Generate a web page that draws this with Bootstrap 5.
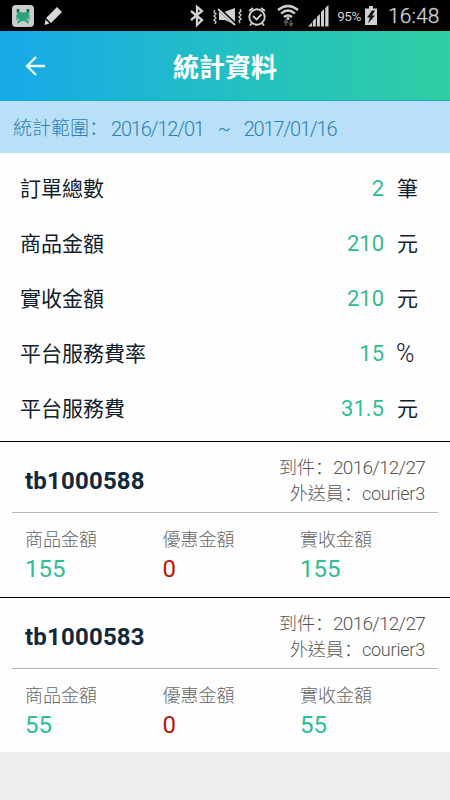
<!DOCTYPE html>
<html lang="zh-Hant">
<head>
<meta charset="utf-8">
<meta name="viewport" content="width=device-width, initial-scale=1">
<title>統計資料</title>
<link href="https://cdn.jsdelivr.net/npm/bootstrap@5.3.0/dist/css/bootstrap.min.css" rel="stylesheet">
<style>
body{font-family:Roboto,"Noto Sans CJK TC",sans-serif;background:#ededed;color:#10202c;white-space:nowrap;overflow:hidden}
.status-bar{height:31px;background:#000;color:#d0d0d0;padding:0 10px 0 12px}
.status-bar svg{display:block;flex:none}
.battery-text{font-size:13.5px;margin:2px 3px 0 7px;letter-spacing:-.4px}
.clock{font-size:21px;font-weight:300;margin-left:10px;padding-top:2px;line-height:29px;width:52px;letter-spacing:.1px;-webkit-text-stroke:.3px #d0d0d0}
.app-bar{height:70px;background:linear-gradient(90deg,#15a9e8,#22bfc4 50%,#2fcea3);color:#fff;border-bottom:1px solid #21a7c2}
.app-bar svg{width:24px;height:24px;margin-left:24px}
.app-title{font-size:26px;font-weight:700;line-height:65px;padding-top:5px}
.app-end{width:48px}
.range-bar{height:52px;background:#b9e0f9;color:#2f7fb3;padding:4px 12px 0 13px;font-size:19px;font-weight:300}
.range-date{font-size:20px;letter-spacing:-1.2px}
.range-date.from{margin-left:3px}
.tilde{margin:0 13px 0 14px}
.colon{font-family:"Noto Sans CJK SC",sans-serif;line-height:1}
.summary{padding:9px 32px 4px 20px;background:#fefefe}
.summary-row{height:55px;font-size:21px}
.summary-row .amount{color:#2fbd94;font-size:22px;padding-bottom:2px}
.unit{width:21px;margin-left:13px}
.unit.percent{font-size:25px;font-weight:300;line-height:30px;margin-left:12px;width:22px;padding-bottom:2px}
.order{height:156px;border-top:1.5px solid #000;background:#fefefe;padding:0 12px}
.order + .order{height:155px}
.order-head{height:71px;border-bottom:1px solid #b8b8b8;padding:13px 13px 0 13px}
.order-id{font-size:24px;line-height:52px;font-weight:700;color:#10293c;letter-spacing:.2px}
.meta{font-size:18px;line-height:26px;color:#555;font-weight:300}
.meta>div{height:26px}
.meta-val{font-size:19px;letter-spacing:-.75px;line-height:1}
.courier{font-size:18px;letter-spacing:-.2px;line-height:1}
.order-body{padding:13px 0 0 13px}
.order-body>div{width:137.5px}
.label-text{font-size:18px;line-height:27px;color:#666;font-weight:300}
.figure-text{font-size:24px;line-height:33px;color:#2fbd94}
.figure-text.red{color:#b81708}
</style>
<script src="https://cdn.jsdelivr.net/npm/bootstrap@5.3.0/dist/js/bootstrap.bundle.min.js"></script>
</head>
<body>
<div class="status-bar d-flex align-items-center">
<svg width="22" height="22" viewBox="0 0 22 22"><rect width="22" height="22" rx="4" fill="#ccc"/><path d="M6 6q5 3 10 0l1 3q0 5-3 6l3 1-1 3-2-2q-3-2-6 0l-2 2-1-3 3-1q-3-1-3-6z" fill="#2fa17b"/><path d="M6 4v4M16 4v4" stroke="#2fa17b" stroke-width="3"/><path d="M6 4v3M16 4v3" stroke="#253c30" stroke-width="1.2"/><path d="M5 10v5M17 10v5" stroke="#2fa17b" stroke-width="1.3"/></svg>
<svg class="ms-2" width="22" height="22" viewBox="0 0 22 22" fill="#d8d8d8"><path d="M4 13 15 2l5 5L9 18zM3.500 14.500l4 4L2.500 20z"/></svg>
<svg class="ms-auto" width="141" height="27" viewBox="189 1 141 27" fill="none" stroke="#d0d0d0">
<path d="m191 10 11 9-5 5V6l5 4-11 9" stroke-width="2.3"/>
<path d="m215 9-1 2 2 2-2 2 2 2-2 2 2 2-1 2m25-15 1 2-2 2 2 2-2 2 2 2-2 2 1 2" stroke-width="1.300"/>
<path d="M219 11h5l11-4v17l-10-5h-6z" fill="#d0d0d0" stroke="none"/><path d="m218 7 18 17" stroke="#000" stroke-width="3.500"/><path d="m218 8 17 16" stroke-width="1.800"/>
<circle cx="257" cy="16" r="7.700" stroke-width="1.900"/><path d="m253 15 3.500 3.500 5-5M249 10l4-3m8 0 4 3M252 22l-2 2.500m12-2.500 2 2.500" stroke-width="1.900"/>
<path d="M278 9q10-8 20 0m-17 3.500q7-6 14 0m-11 3.500q4-3 8 0" stroke-width="2.300"/><circle cx="288" cy="17.500" r="1.500" fill="#d0d0d0" stroke="none"/>
<path d="M286 25v-5m-2 2 2-3 2 3m3-3v5m-2-2 2 3 2-3" stroke="#555" stroke-width="1.500"/>
<g fill="#d0d0d0" stroke="none"><path d="M308 25.500l4-4v4zM312.800 20l3-3v8.500h-3zM316.900 16l3-3v12.500h-3zM321 11l3-3v17.500h-3zM325.200 7l3.300-3v21.500h-3.300z"/></g>
</svg>
<span class="battery-text">95%</span>
<svg width="14" height="21" viewBox="0 0 14 21"><path d="M5 1h4v2.500h4V20H1V3.500h4z" fill="#d0d0d0"/><path d="m8 5.500-5 7h3l-2 6 7-8H8l3-5z" fill="#111"/></svg>
<span class="clock">16:48</span>
</div>
<header class="app-bar d-flex justify-content-between align-items-center">
<svg viewBox="0 0 24 24" fill="none" stroke="#e8fbff" stroke-width="2.400"><path d="M21 12H3M12 3l-9 9 9 9"/></svg>
<div class="app-title">統計資料</div>
<div class="app-end"></div>
</header>
<div class="range-bar d-flex align-items-center"><span>統計範圍<span class="colon" lang="zh-Hans">：</span></span><span class="range-date from">2016/12/01</span><span class="tilde">~</span><span class="range-date">2017/01/16</span></div>
<section class="summary">
<div class="summary-row d-flex align-items-center"><span class="me-auto">訂單總數</span><span class="amount">2</span><span class="unit">筆</span></div>
<div class="summary-row d-flex align-items-center"><span class="me-auto">商品金額</span><span class="amount">210</span><span class="unit">元</span></div>
<div class="summary-row d-flex align-items-center"><span class="me-auto">實收金額</span><span class="amount">210</span><span class="unit">元</span></div>
<div class="summary-row d-flex align-items-center"><span class="me-auto">平台服務費率</span><span class="amount">15</span><span class="unit percent">%</span></div>
<div class="summary-row d-flex align-items-center"><span class="me-auto">平台服務費</span><span class="amount">31.5</span><span class="unit">元</span></div>
</section>
<article class="order">
<div class="order-head d-flex justify-content-between"><div class="order-id">tb1000588</div><div class="meta text-end"><div>到件<span class="colon" lang="zh-Hans">：</span><span class="meta-val">2016/12/27</span></div><div>外送員<span class="colon" lang="zh-Hans">：</span><span class="courier">courier3</span></div></div></div>
<div class="order-body d-flex">
<div><div class="label-text">商品金額</div><div class="figure-text">155</div></div>
<div><div class="label-text">優惠金額</div><div class="figure-text red">0</div></div>
<div><div class="label-text">實收金額</div><div class="figure-text">155</div></div>
</div>
</article>
<article class="order">
<div class="order-head d-flex justify-content-between"><div class="order-id">tb1000583</div><div class="meta text-end"><div>到件<span class="colon" lang="zh-Hans">：</span><span class="meta-val">2016/12/27</span></div><div>外送員<span class="colon" lang="zh-Hans">：</span><span class="courier">courier3</span></div></div></div>
<div class="order-body d-flex">
<div><div class="label-text">商品金額</div><div class="figure-text">55</div></div>
<div><div class="label-text">優惠金額</div><div class="figure-text red">0</div></div>
<div><div class="label-text">實收金額</div><div class="figure-text">55</div></div>
</div>
</article>
</body>
</html>
